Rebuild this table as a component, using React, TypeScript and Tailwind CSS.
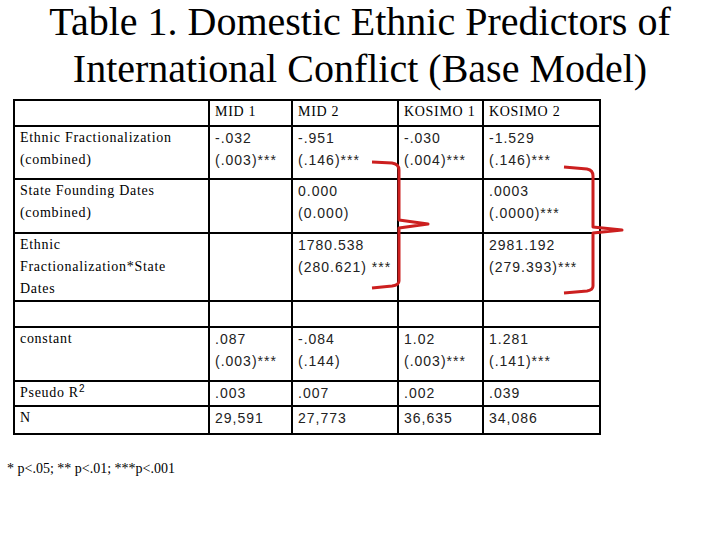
const serif = "font-['Liberation_Serif','Times_New_Roman',serif] tracking-[0.7px]";
const sans = "font-['Liberation_Sans',Arial,sans-serif] tracking-[1px] text-[#222]";

type Cell = { lines?: string[] };

function Lines({ lines }: { lines?: string[] }) {
  if (!lines) return null;
  return (
    <>
      {lines.map((l, i) => (
        <div key={i}>{l}</div>
      ))}
    </>
  );
}

const rows: { label: React.ReactNode; h: string; cells: Cell[] }[] = [
  {
    label: <Lines lines={["Ethnic Fractionalization", "(combined)"]} />,
    h: "h-[53px]",
    cells: [
      { lines: ["-.032", "(.003)***"] },
      { lines: ["-.951", "(.146)***"] },
      { lines: ["-.030", "(.004)***"] },
      { lines: ["-1.529", "(.146)***"] },
    ],
  },
  {
    label: <Lines lines={["State Founding Dates", "(combined)"]} />,
    h: "h-[54px]",
    cells: [{}, { lines: ["0.000", "(0.000)"] }, {}, { lines: [".0003", "(.0000)***"] }],
  },
  {
    label: <Lines lines={["Ethnic", "Fractionalization*State", "Dates"]} />,
    h: "h-[65px]",
    cells: [
      {},
      { lines: ["1780.538", "(280.621) ***"] },
      {},
      { lines: ["2981.192", "(279.393)***"] },
    ],
  },
  { label: null, h: "h-[26px]", cells: [{}, {}, {}, {}] },
  {
    label: <Lines lines={["constant"]} />,
    h: "h-[54px]",
    cells: [
      { lines: [".087", "(.003)***"] },
      { lines: ["-.084", "(.144)"] },
      { lines: ["1.02", "(.003)***"] },
      { lines: ["1.281", "(.141)***"] },
    ],
  },
  {
    label: (
      <div>
        Pseudo R<sup className="text-[10px] font-['Liberation_Sans',sans-serif]">2</sup>
      </div>
    ),
    h: "h-[25px]",
    cells: [{ lines: [".003"] }, { lines: [".007"] }, { lines: [".002"] }, { lines: [".039"] }],
  },
  {
    label: <Lines lines={["N"]} />,
    h: "h-[28px]",
    cells: [
      { lines: ["29,591"] },
      { lines: ["27,773"] },
      { lines: ["36,635"] },
      { lines: ["34,086"] },
    ],
  },
];

const td = "border-2 border-black align-top px-[5px] pt-0 text-[14px] leading-[22px]";

export default function App() {
  return (
    <div className="relative w-[720px] h-[540px] bg-white overflow-hidden text-black">
      <div className="flex flex-col items-center gap-[3px] text-[40px] leading-[44px] font-['Liberation_Serif','Times_New_Roman',serif]">
        <div>Table 1. Domestic Ethnic Predictors of</div>
        <div>International Conflict (Base Model)</div>
      </div>

      <table className="ml-[13px] mt-[8px] table-fixed border-collapse w-[588px]">
        <colgroup>
          <col className="w-[195px]" />
          <col className="w-[83px]" />
          <col className="w-[106px]" />
          <col className="w-[85px]" />
          <col className="w-[117px]" />
        </colgroup>
        <tbody>
          <tr className="h-[26px]">
            <td className={`${td} ${serif}`}></td>
            <td className={`${td} ${serif}`}>MID 1</td>
            <td className={`${td} ${serif}`}>MID 2</td>
            <td className={`${td} ${serif} whitespace-nowrap`}>KOSIMO 1</td>
            <td className={`${td} ${serif}`}>KOSIMO 2</td>
          </tr>
          {rows.map((r, i) => (
            <tr key={i} className={r.h}>
              <td className={`${td} ${serif}`}>{r.label}</td>
              {r.cells.map((c, j) => (
                <td key={j} className={`${td} ${sans} whitespace-nowrap`}>
                  <Lines lines={c.lines} />
                </td>
              ))}
            </tr>
          ))}
        </tbody>
      </table>

      <p className="mt-[23px] ml-[7px] text-[14px] font-['Liberation_Serif','Times_New_Roman',serif]">
        * p&lt;.05; ** p&lt;.01; ***p&lt;.001
      </p>

      <svg
        className="absolute left-0 top-0 pointer-events-none"
        width="720"
        height="540"
        viewBox="0 0 720 540"
        fill="none"
      >
        <path
          d="M372 162 L392 163 Q399 164 399 170 L399 220 L428 224 L399 228 L399 281 Q399 285 392 286 L372 288"
          stroke="#cc1f1f"
          strokeWidth="3"
          strokeLinejoin="round"
        />
        <path
          d="M564 167 L587 169 Q593 170 593 176 L593 227 L622 230 L593 233 L593 286 Q593 290 587 291 L564 293"
          stroke="#cc1f1f"
          strokeWidth="3"
          strokeLinejoin="round"
        />
      </svg>
    </div>
  );
}
